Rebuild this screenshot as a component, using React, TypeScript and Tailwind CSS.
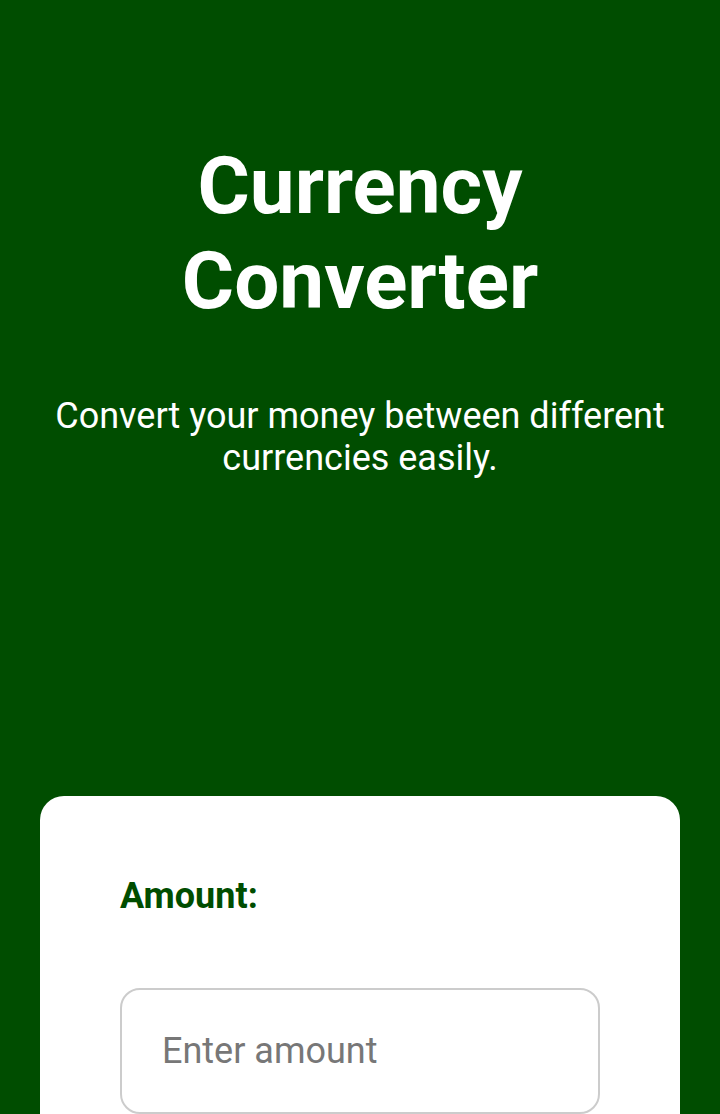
export default function App() {
  return (
    <div
      className="min-h-screen bg-[#004d00] px-10 text-center"
      style={{ fontFamily: 'Roboto, "Liberation Sans", sans-serif' }}
    >
      <header className="pt-[139px] pb-[317px]">
        <h1 className="text-[80px] font-bold leading-[95px] text-white">
          Currency
          <br />
          Converter
        </h1>
        <p className="mt-[66px] text-[36px] leading-[42px] text-white">
          Convert your money between different currencies easily.
        </p>
      </header>
      <section className="rounded-[24px] bg-white px-20 pt-[79px] pb-20 text-left">
        <label className="block text-[36px] font-bold leading-[42px] text-[#004d00]">Amount:</label>
        <input
          type="text"
          placeholder="Enter amount"
          className="mt-[71px] h-[126px] w-full rounded-[20px] border-2 border-[#cccccc] px-10 text-[36px] text-[#333] placeholder:text-[#777]"
        />
      </section>
    </div>
  )
}
